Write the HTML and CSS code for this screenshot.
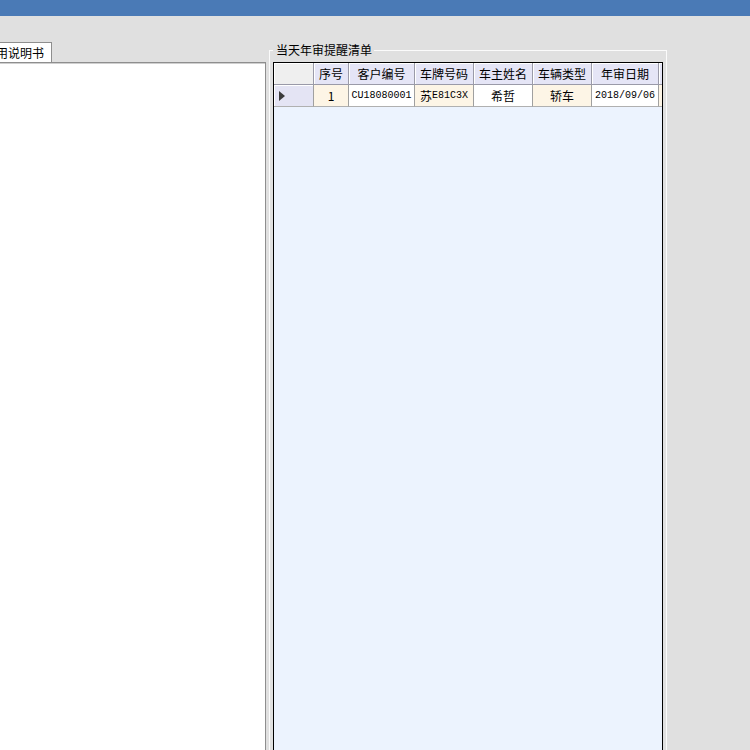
FILE: index.html
```html
<!DOCTYPE html>
<html lang="zh">
<head>
<meta charset="utf-8">
<title>当天年审提醒清单</title>
<link rel="stylesheet" href="styles.css">
</head>
<body>
<div class="topbar"></div>
<div class="main">
  <div class="left">
    <div class="tabs"><div class="tab">使用说明书</div></div>
    <div class="panel"></div>
  </div>
  <fieldset class="group">
    <legend class="group-title">当天年审提醒清单</legend>
    <div class="grid">
      <div class="row head">
        <div class="cell ind"></div>
        <div class="cell">序号</div>
        <div class="cell">客户编号</div>
        <div class="cell">车牌号码</div>
        <div class="cell">车主姓名</div>
        <div class="cell">车辆类型</div>
        <div class="cell">年审日期</div>
        <div class="cell tail"></div>
      </div>
      <div class="row data">
        <div class="cell ind"><svg class="arrow" width="6" height="10" viewBox="0 0 6 10"><polygon points="0,0 6,5 0,10" fill="#3c3c3c"/></svg></div>
        <div class="cell alt">1</div>
        <div class="cell mono">CU18080001</div>
        <div class="cell alt">苏<span class="mono">E81C3X</span></div>
        <div class="cell">希哲</div>
        <div class="cell alt">轿车</div>
        <div class="cell mono">2018/09/06</div>
        <div class="cell alt tail"></div>
      </div>
    </div>
  </fieldset>
</div>
</body>
</html>
```
FILE: styles.css
```css
html, body {
  margin: 0;
  padding: 0;
  width: 750px;
  height: 750px;
  overflow: hidden;
  background: #e0e0e0;
  font-family: "Noto Sans CJK SC", "DejaVu Sans", sans-serif;
  font-size: 12px;
  color: #000;
}

.topbar {
  height: 16px;
  background: #4a7ab6;
}

.main {
  display: flex;
  align-items: flex-start;
  padding-top: 26px;
}

.left {
  width: 266px;
  flex: none;
  display: flex;
  flex-direction: column;
}

.tabs {
  display: flex;
  height: 20px;
}

.tab {
  margin-left: -21px;
  height: 19px;
  line-height: 19px;
  padding: 0 7px 0 4px;
  background: #fff;
  border: 1px solid #8e8e8e;
  border-bottom: none;
  white-space: nowrap;
}

.panel {
  height: 700px;
  background: #fff;
  border-top: 1px solid #8e8e8e;
  border-right: 1px solid #8e8e8e;
  box-shadow: inset 0 1px 0 #cfcfcf;
}

.group {
  flex: none;
  box-sizing: border-box;
  width: 398px;
  min-width: 0;
  margin: 1px 0 0 3px;
  padding: 5px 3px 0 3px;
  border: 1px solid #fbfbfb;
  height: 760px;
}

.group-title {
  padding: 0 2px 0 3px;
  line-height: 14px;
  margin: 0;
}

.grid {
  border: 1px solid #000;
  background: #ecf3fe;
  height: 720px;
}

.row {
  display: grid;
  grid-template-columns: 40px 35px 66px 59px 59px 59px 67px 3px;
  height: 22px;
}

.cell {
  box-sizing: border-box;
  height: 22px;
  border-right: 1px solid #a4a4a4;
  border-bottom: 1px solid #a4a4a4;
  display: flex;
  align-items: center;
  justify-content: center;
  white-space: nowrap;
  overflow: hidden;
}

.head .cell {
  background: #e5e5f6;
  box-shadow: inset 1px 1px 0 #fff;
  border-right-color: #9a9aa8;
  border-bottom-color: #9a9aa8;
}

.head .cell.ind {
  background: #efefef;
}

.data .cell {
  background: #fff;
  border-right-color: #a0a0a0;
  border-bottom-color: #b0b0b0;
}

.data .cell.alt {
  background: #fdf5e6;
}

.data .cell.ind {
  background: #e4e4f4;
  justify-content: flex-start;
  padding-left: 5px;
  box-shadow: inset 1px 1px 0 #fff;
}

.cell.tail {
  border-right: none;
}

.mono {
  font-family: "Liberation Mono", "DejaVu Sans Mono", monospace;
  font-size: 10px;
}

.arrow {
  display: block;
}
```
